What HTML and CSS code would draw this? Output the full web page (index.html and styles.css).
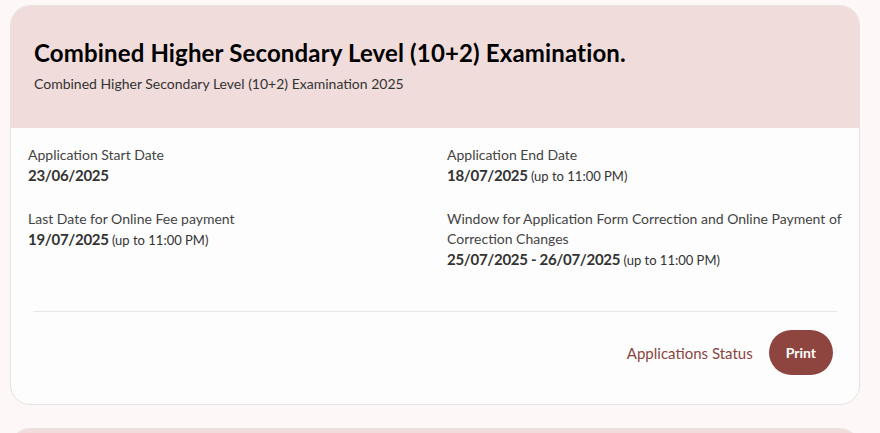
FILE: index.html
```html
<!DOCTYPE html>
<html lang="en">
<head>
    <meta charset="UTF-8">
    <title>Exam</title>
    <link rel="stylesheet" href="styles.css">
</head>
<body>
    <div class="card">
        <div class="card-head">
            <h2>Combined Higher Secondary Level (10+2) Examination.</h2>
            <p>Combined Higher Secondary Level (10+2) Examination 2025</p>
        </div>
        <div class="card-body">
            <div class="dates">
                <div class="item">
                    <span class="label">Application Start Date</span>
                    <span class="value">23/06/2025</span>
                </div>
                <div class="item">
                    <span class="label">Application End Date</span>
                    <span class="value">18/07/2025 <small>(up to 11:00 PM)</small></span>
                </div>
                <div class="item">
                    <span class="label">Last Date for Online Fee payment</span>
                    <span class="value">19/07/2025 <small>(up to 11:00 PM)</small></span>
                </div>
                <div class="item">
                    <span class="label">Window for Application Form Correction and Online Payment of Correction Changes</span>
                    <span class="value">25/07/2025 - 26/07/2025 <small>(up to 11:00 PM)</small></span>
                </div>
            </div>
            <hr class="divider">
            <div class="actions">
                <a class="link" href="#">Applications Status</a>
                <a class="btn" href="#">Print</a>
            </div>
        </div>
    </div>
    <div class="card next">
        <div class="card-head"></div>
    </div>
</body>
</html>
```
FILE: styles.css
```css
html {
    background: #fdf8f7;
}

body {
    margin: 0;
    padding: 5px 20px 0 10px;
    font-family: "Lato", "Open Sans", sans-serif;
    color: #333;
}

.card {
    background: #fdfdfd;
    border: 1px solid #e6e2e1;
    border-radius: 20px;
    overflow: hidden;
}

.card-head {
    background: #f0dcdb;
    padding: 32px 23px 36px;
}

.card-head h2 {
    margin: 0;
    font-size: 24px;
    font-weight: 700;
    letter-spacing: 0.15px;
    color: #000;
}

.card-head p {
    margin: 8px 0 0;
    font-size: 14px;
    color: #333;
}

.card-body {
    padding: 17px 17px 29px;
}

.dates {
    display: grid;
    grid-template-columns: 1fr 1fr;
    column-gap: 24px;
    row-gap: 22px;
}

.item {
    display: flex;
    flex-direction: column;
}

.label {
    font-size: 14px;
    line-height: 20px;
    color: #444;
}

.value {
    font-size: 15px;
    font-weight: 700;
    letter-spacing: -0.3px;
    line-height: 21px;
    color: #333;
}

.value small {
    font-size: 13px;
    font-weight: 400;
    letter-spacing: 0;
}

.divider {
    border: 0;
    border-top: 1px solid #e8e6e6;
    margin: 40px 5px 18px;
}

.actions {
    display: flex;
    justify-content: flex-end;
    align-items: center;
    gap: 16px;
    padding-right: 9px;
}

.link {
    color: #8b4540;
    font-size: 15px;
    text-decoration: none;
}

.btn {
    display: inline-block;
    background: #8e4540;
    color: #fff;
    font-size: 14px;
    font-weight: 700;
    line-height: 17px;
    text-decoration: none;
    padding: 14px 17px;
    border-radius: 24px;
}

.next {
    margin-top: 23px;
    height: 40px;
}

.next .card-head {
    height: 40px;
    padding: 0;
}
```
